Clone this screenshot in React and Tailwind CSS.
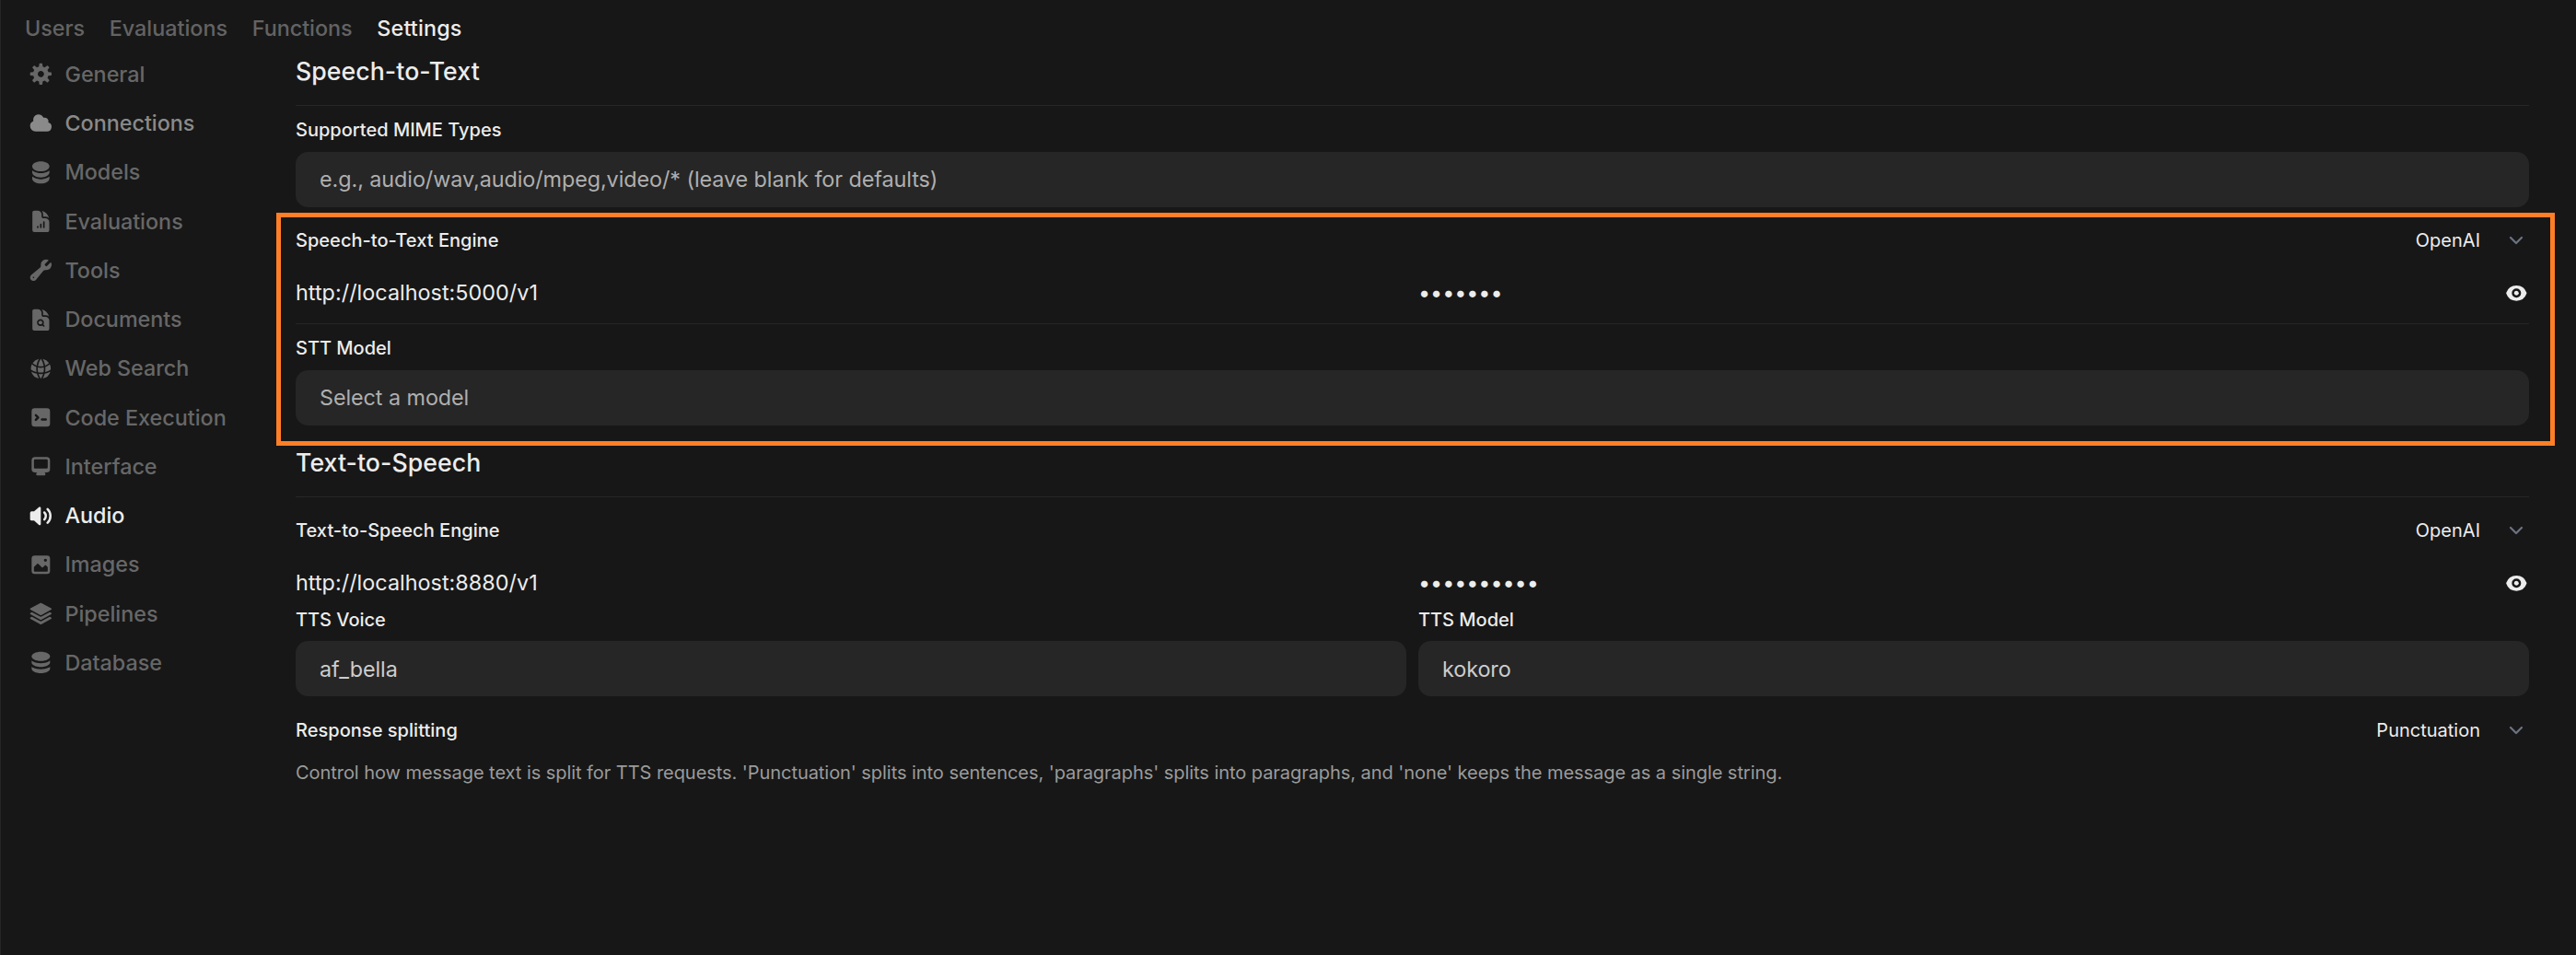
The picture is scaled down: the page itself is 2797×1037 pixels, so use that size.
import React from "react";
import {
  HiDocumentChartBar,
  HiDocumentMagnifyingGlass,
  HiWrench,
  HiGlobeAlt,
} from "react-icons/hi2";

const paths16 = {
  cog: [
    "M6.955 1.45A.5.5 0 0 1 7.452 1h1.096a.5.5 0 0 1 .497.45l.17 1.699c.484.12.94.312 1.356.562l1.321-1.081a.5.5 0 0 1 .67.033l.774.775a.5.5 0 0 1 .034.67l-1.08 1.32c.25.417.44.873.561 1.357l1.699.17a.5.5 0 0 1 .45.497v1.096a.5.5 0 0 1-.45.497l-1.699.17c-.12.484-.312.94-.562 1.356l1.082 1.322a.5.5 0 0 1-.034.67l-.774.774a.5.5 0 0 1-.67.033l-1.322-1.08c-.416.25-.872.44-1.356.561l-.17 1.699a.5.5 0 0 1-.497.45H7.452a.5.5 0 0 1-.497-.45l-.17-1.699a4.973 4.973 0 0 1-1.356-.562L4.108 13.37a.5.5 0 0 1-.67-.033l-.774-.775a.5.5 0 0 1-.034-.67l1.08-1.32a4.971 4.971 0 0 1-.561-1.357l-1.699-.17A.5.5 0 0 1 1 8.548V7.452a.5.5 0 0 1 .45-.497l1.699-.17c.12-.484.312-.94.562-1.356L2.629 4.107a.5.5 0 0 1 .034-.67l.774-.774a.5.5 0 0 1 .67-.033L5.43 3.71a4.97 4.97 0 0 1 1.356-.561l.17-1.699ZM6 8c0 .538.212 1.026.558 1.385l.057.057a2 2 0 0 0 2.828-2.828l-.058-.056A2 2 0 0 0 6 8Z",
  ],
  cloud: [
    "M1 9.5A3.5 3.5 0 0 0 4.5 13H12a3 3 0 0 0 .917-5.857 2.503 2.503 0 0 0-3.198-3.019 3.5 3.5 0 0 0-6.628 2.171A3.5 3.5 0 0 0 1 9.5Z",
  ],
  terminal: [
    "M2 4a2 2 0 0 1 2-2h8a2 2 0 0 1 2 2v8a2 2 0 0 1-2 2H4a2 2 0 0 1-2-2V4Zm2.22 1.97a.75.75 0 0 0 0 1.06l.97.97-.97.97a.75.75 0 1 0 1.06 1.06l1.5-1.5a.75.75 0 0 0 0-1.06l-1.5-1.5a.75.75 0 0 0-1.06 0ZM8.75 8.5a.75.75 0 0 0 0 1.5h2.5a.75.75 0 0 0 0-1.5h-2.5Z",
  ],
  desktop: [
    "M2 4.25A2.25 2.25 0 0 1 4.25 2h7.5A2.25 2.25 0 0 1 14 4.25v5.5A2.25 2.25 0 0 1 11.75 12h-1.312c.1.128.21.248.328.36a.75.75 0 0 1 .234.545v.345a.75.75 0 0 1-.75.75h-4.5a.75.75 0 0 1-.75-.75v-.345a.75.75 0 0 1 .234-.545c.118-.111.228-.232.328-.36H4.25A2.25 2.25 0 0 1 2 9.75v-5.5Zm2.25-.75a.75.75 0 0 0-.75.75v4.5c0 .414.336.75.75.75h7.5a.75.75 0 0 0 .75-.75v-4.5a.75.75 0 0 0-.75-.75h-7.5Z",
  ],
  speaker: [
    "M7.557 2.066A.75.75 0 0 1 8 2.75v10.5a.75.75 0 0 1-1.248.56L3.59 11H2a1 1 0 0 1-1-1V6a1 1 0 0 1 1-1h1.59l3.162-2.81a.75.75 0 0 1 .805-.124ZM12.95 3.05a.75.75 0 1 0-1.06 1.06 5.5 5.5 0 0 1 0 7.78.75.75 0 1 0 1.06 1.06 7 7 0 0 0 0-9.9Z",
    "M10.828 5.172a.75.75 0 1 0-1.06 1.06 2.5 2.5 0 0 1 0 3.536.75.75 0 1 0 1.06 1.06 4 4 0 0 0 0-5.656Z",
  ],
  photo: [
    "M2 4a2 2 0 0 1 2-2h8a2 2 0 0 1 2 2v8a2 2 0 0 1-2 2H4a2 2 0 0 1-2-2V4Zm10.5 5.707a.5.5 0 0 0-.146-.353l-1-1a.5.5 0 0 0-.708 0L9.354 9.646a.5.5 0 0 1-.708 0L6.354 7.354a.5.5 0 0 0-.708 0l-2 2a.5.5 0 0 0-.146.353V12a.5.5 0 0 0 .5.5h8a.5.5 0 0 0 .5-.5V9.707ZM12 5a1 1 0 1 1-2 0 1 1 0 0 1 2 0Z",
  ],
  database: [
    "M8 7c3.314 0 6-1.343 6-3s-2.686-3-6-3-6 1.343-6 3 2.686 3 6 3Z",
    "M8 8.5c1.84 0 3.579-.37 4.914-1.037A6.33 6.33 0 0 0 14 6.78V8c0 1.657-2.686 3-6 3S2 9.657 2 8V6.78c.346.273.72.5 1.087.683C4.42 8.131 6.16 8.5 8 8.5Z",
    "M8 12.5c1.84 0 3.579-.37 4.914-1.037.366-.183.74-.41 1.086-.684V12c0 1.657-2.686 3-6 3s-6-1.343-6-3v-1.22c.346.273.72.5 1.087.683C4.42 12.131 6.16 12.5 8 12.5Z",
  ],
  eye: [
    "M8 9.5a1.5 1.5 0 1 0 0-3 1.5 1.5 0 0 0 0 3Z",
    "M1.38 8.28a.87.87 0 0 1 0-.566 7.003 7.003 0 0 1 13.238.006.87.87 0 0 1 0 .566A7.003 7.003 0 0 1 1.379 8.28ZM11 8a3 3 0 1 1-6 0 3 3 0 0 1 6 0Z",
  ],
};

const stackPaths = [
  "M10 1c3.866 0 7 1.79 7 4s-3.134 4-7 4-7-1.79-7-4 3.134-4 7-4Zm5.694 8.13c.464-.264.91-.583 1.306-.952V10c0 2.21-3.134 4-7 4s-7-1.79-7-4V8.178c.396.37.842.688 1.306.953C5.838 10.006 7.854 10.5 10 10.5s4.162-.494 5.694-1.37ZM3 13.179V15c0 2.21 3.134 4 7 4s7-1.79 7-4v-1.822c-.396.37-.842.688-1.306.953-1.532.875-3.548 1.369-5.694 1.369s-4.162-.494-5.694-1.37A7.009 7.009 0 0 1 3 13.179Z",
];

const layerPaths = [
  "M11.644 1.59a.75.75 0 0 1 .712 0l9.75 5.25a.75.75 0 0 1 0 1.32l-9.75 5.25a.75.75 0 0 1-.712 0l-9.75-5.25a.75.75 0 0 1 0-1.32l9.75-5.25Z",
  "m3.265 10.602 7.668 4.129a2.25 2.25 0 0 0 2.134 0l7.668-4.13 1.37.739a.75.75 0 0 1 0 1.32l-9.75 5.25a.75.75 0 0 1-.71 0l-9.75-5.25a.75.75 0 0 1 0-1.32l1.37-.738Z",
  "m10.933 19.231-7.668-4.13-1.37.739a.75.75 0 0 0 0 1.32l9.75 5.25c.221.12.489.12.71 0l9.75-5.25a.75.75 0 0 0 0-1.32l-1.37-.738-7.668 4.13a2.25 2.25 0 0 1-2.134-.001Z",
];

function Glyph({ paths, box = 16 }) {
  return (
    <svg viewBox={`0 0 ${box} ${box}`} fill="currentColor" className="size-[26.67px] shrink-0">
      {paths.map((d) => (
        <path key={d} d={d} fillRule="evenodd" clipRule="evenodd" />
      ))}
    </svg>
  );
}

const lib = "size-[26.67px] shrink-0";

const sidebar = [
  { label: "General", icon: <Glyph paths={paths16.cog} /> },
  { label: "Connections", icon: <Glyph paths={paths16.cloud} />, hover: true },
  { label: "Models", icon: <Glyph paths={stackPaths} box={20} /> },
  { label: "Evaluations", icon: <HiDocumentChartBar className={lib} /> },
  { label: "Tools", icon: <HiWrench className={lib} /> },
  { label: "Documents", icon: <HiDocumentMagnifyingGlass className={lib} /> },
  { label: "Web Search", icon: <HiGlobeAlt className={lib} /> },
  { label: "Code Execution", icon: <Glyph paths={paths16.terminal} /> },
  { label: "Interface", icon: <Glyph paths={paths16.desktop} /> },
  { label: "Audio", icon: <Glyph paths={paths16.speaker} />, active: true },
  { label: "Images", icon: <Glyph paths={paths16.photo} /> },
  { label: "Pipelines", icon: <Glyph paths={layerPaths} box={24} /> },
  { label: "Database", icon: <Glyph paths={paths16.database} /> },
];

function tone(item) {
  if (item.active) return "text-[#ececec]";
  if (item.hover) return "text-[#8a8a8a]";
  return "text-[#676767]";
}

function Label({ children }) {
  return <div className="h-[26px] text-[20px] leading-[26px] font-medium">{children}</div>;
}

function Field({ children, placeholder }) {
  return (
    <div
      className={`flex h-[60px] items-center rounded-[13.33px] bg-[#262626] px-[26px] tracking-[-0.055px] ${
        placeholder ? "text-[#afafaf]" : "pt-px text-[#cdcdcd]"
      }`}
    >
      {children}
    </div>
  );
}

function SelectRow({ label, value }) {
  return (
    <div className="flex h-[50px] items-center justify-between text-[20px]">
      <div className="pt-[2px] font-medium tracking-[0.03px]">{label}</div>
      <div className="flex items-center gap-[24px]">
        <span className="pt-[2px]">{value}</span>
        <svg viewBox="0 0 20 20" fill="none" className="-mr-px size-[30px]">
          <path d="m6 8 4 4 4-4" stroke="#6b7280" strokeWidth="1.5" strokeLinecap="round" strokeLinejoin="round" />
        </svg>
      </div>
    </div>
  );
}

function ConnectionRow({ url, secret }) {
  return (
    <div className="grid h-[64px] grid-cols-2 items-center gap-[13px]">
      <div className="tracking-[0.04px]">{url}</div>
      <div className="flex items-center justify-between">
        <span className="tracking-[-0.05px]">{secret}</span>
        <Glyph paths={paths16.eye} />
      </div>
    </div>
  );
}

function Rule() {
  return <div className="h-px bg-[#262626]" />;
}

export default function App() {
  return (
    <div className="h-[1037px] w-full overflow-hidden border-l border-[#262626] bg-[#171717] font-['Inter',sans-serif] text-[23.33px] leading-[33.33px] text-[#ececec]">
      <nav className="flex h-[54px] gap-[26.67px] pt-[14px] pl-[26px] font-medium whitespace-nowrap text-[#636363]">
        <span>Users</span>
        <span>Evaluations</span>
        <span>Functions</span>
        <span className="tracking-[0.15px] text-[#ececec]">Settings</span>
      </nav>
      <div className="flex">
        <aside className="w-[320px] shrink-0 pl-[30px] font-medium">
          {sidebar.map((item) => (
            <div key={item.label} className={`flex h-[53.25px] items-center gap-[12.8px] whitespace-nowrap ${tone(item)}`}>
              {item.icon}
              <span>{item.label}</span>
            </div>
          ))}
        </aside>
        <main className="mr-[51px] flex-1">
          <div className="h-[46px] text-[26.67px] leading-[46px] font-medium tracking-[0.07px]">Speech-to-Text</div>
          <div className="mt-[14px] mb-[13px]"><Rule /></div>
          <Label>Supported MIME Types</Label>
          <div className="mt-[11px]">
            <Field placeholder>e.g., audio/wav,audio/mpeg,video/* (leave blank for defaults)</Field>
          </div>

          <section className="mt-[6px] mr-[-28px] ml-[-21px] h-[253px] border-5 border-[#ff7f27] pr-[23px] pl-[16px]">
            <SelectRow label="Speech-to-Text Engine" value="OpenAI" />
            <ConnectionRow url="http://localhost:5000/v1" secret="•••••••" />
            <div className="mt-px mb-[13px]"><Rule /></div>
            <Label>STT Model</Label>
            <div className="mt-[11px]">
              <Field placeholder>Select a model</Field>
            </div>
          </section>

          <div className="h-[36px] text-[26.67px] leading-[36px] font-medium tracking-[0.07px]">Text-to-Speech</div>
          <div className="mt-[19px] mb-[11px]"><Rule /></div>
          <SelectRow label="Text-to-Speech Engine" value="OpenAI" />
          <ConnectionRow url="http://localhost:8880/v1" secret="••••••••••" />
          <div className="-mt-[5px] grid grid-cols-2 gap-x-[13px] gap-y-[10px]">
            <Label>TTS Voice</Label>
            <Label>TTS Model</Label>
            <Field>af_bella</Field>
            <Field>kokoro</Field>
          </div>
          <div className="mt-[12px]">
            <SelectRow label="Response splitting" value="Punctuation" />
          </div>
          <div className="h-[41px] text-[20px] leading-[42px] tracking-[-0.052px] text-[#9b9b9b]">
            Control how message text is split for TTS requests. 'Punctuation' splits into sentences, 'paragraphs' splits into paragraphs, and 'none' keeps the message as a single string.
          </div>
        </main>
      </div>
    </div>
  );
}
